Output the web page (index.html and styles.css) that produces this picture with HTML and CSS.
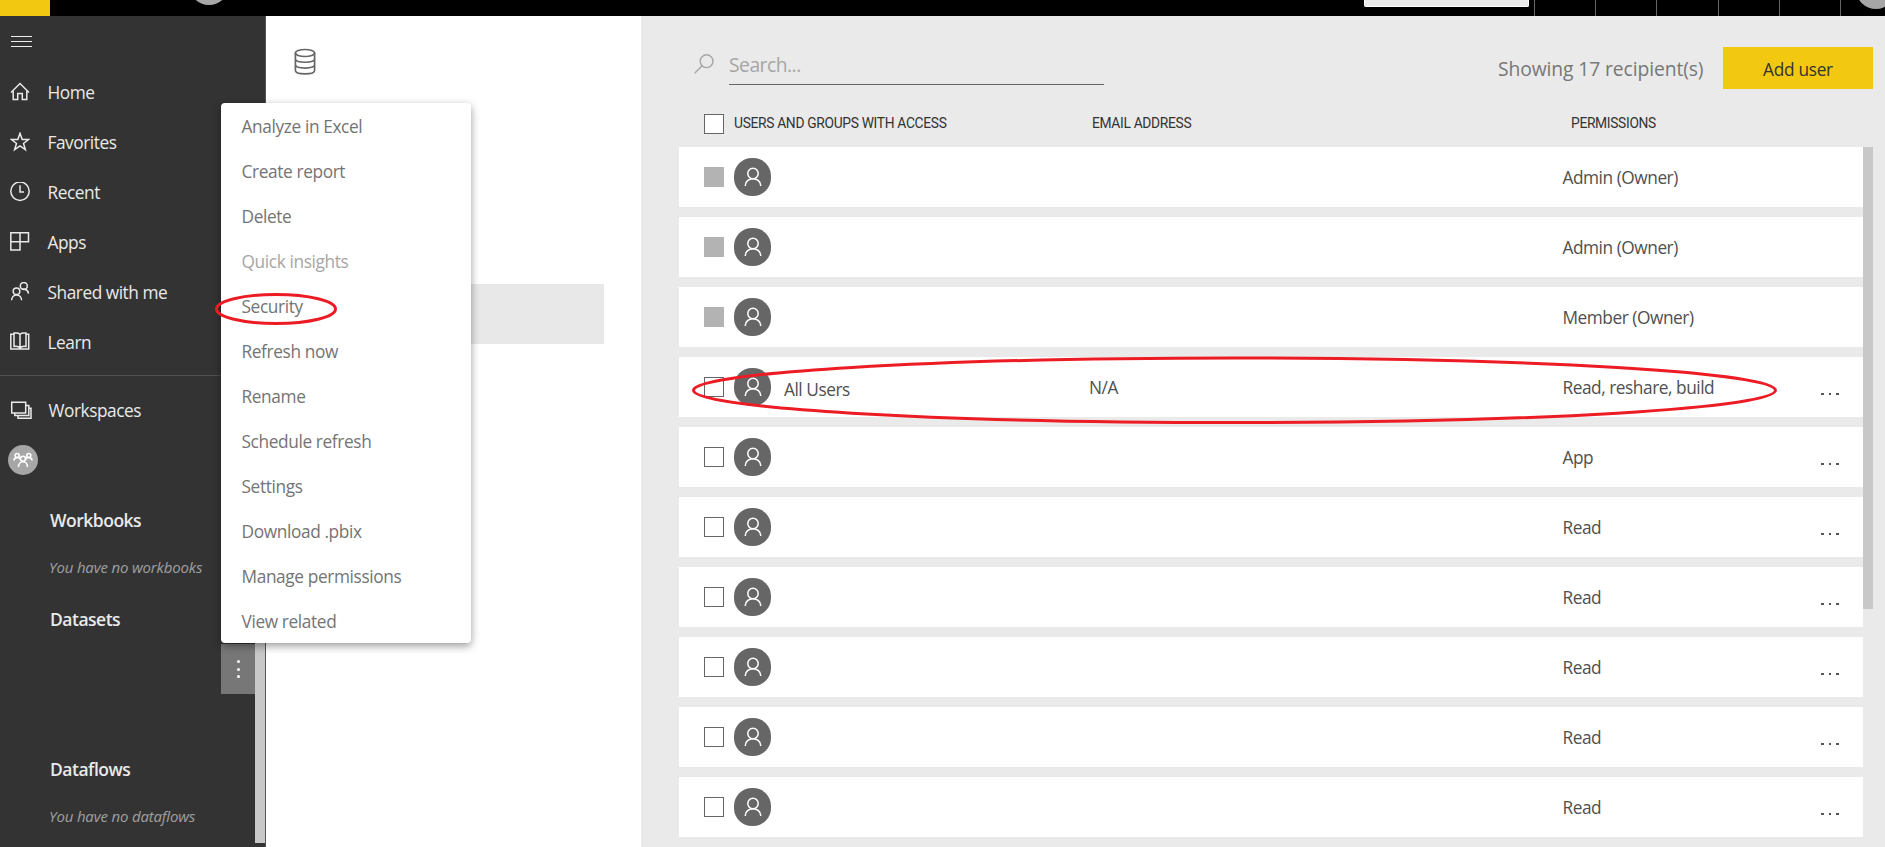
FILE: index.html
```
<!DOCTYPE html>
<html lang="en">
<head>
<meta charset="utf-8">
<title>Manage permissions</title>
<link rel="stylesheet" href="styles.css">
</head>
<body>
<svg class="defs" width="0" height="0" aria-hidden="true">
  <symbol id="person" viewBox="0 0 18 20"><circle cx="9" cy="6.5" r="5.2"/><path d="M1.3 19v-.6C1.3 14.500 4.800 11.700 9 11.700s7.700 2.800 7.700 6.700V19"/></symbol>
</svg>
<header class="topbar">
  <div class="launcher"></div>
  <div class="brand-avatar"></div>
  <div class="top-search"></div>
  <div class="top-cells"><i></i><i></i><i></i><i></i><i></i><i></i></div>
  <div class="user-avatar"></div>
</header>
<div class="body">
  <nav class="sidebar">
    <div class="nav-main">
      <div class="burger"><i></i><i></i><i></i></div>
      <a class="nav-item"><svg width="20" height="20" viewBox="0 0 20 20"><path d="M1 10.500 10 1.500l9 9M3.200 9v8.500h4.500v-6h4.600v6h4.500V9"/></svg><span>Home</span></a>
      <a class="nav-item"><svg width="20" height="20" viewBox="0 0 20 20"><path d="M10 1.300l2.200 6.200h6.300l-5 3.900 1.900 6.200L10 13.900l-5.400 3.700 1.900-6.200-5-3.900h6.300z"/></svg><span>Favorites</span></a>
      <a class="nav-item"><svg width="20" height="20" viewBox="0 0 20 20"><circle cx="10" cy="9.200" r="9.200"/><path d="M10 3.200v6.700h4"/></svg><span>Recent</span></a>
      <a class="nav-item"><svg width="20" height="20" viewBox="0 0 20 20"><path d="M.8.700h17.700v9H.8zM.8 9.700v8.400H10V.7"/></svg><span>Apps</span></a>
      <a class="nav-item"><svg width="20" height="20" viewBox="0 0 20 20"><circle cx="13.800" cy="3.900" r="3.500"/><path d="M12 7.400c1-.5 6-.5 6.500 4.300"/><circle cx="6.500" cy="9.300" r="3.300"/><path d="M1.600 18.200c.3-7 9.700-7 10 0"/></svg><span>Shared with me</span></a>
      <a class="nav-item"><svg width="20" height="20" viewBox="0 0 20 20"><path d="M10 2.200C8.500.800 6 .8 4 1.100v13.300c2-.4 4.500-.4 6 1.700 1.500-2.100 4-2.100 6-1.700V1.100c-2-.3-4.500-.3-6 1.100zv14M4 2.200H.8V17h17.900V2.200H16"/></svg><span>Learn</span></a>
    </div>
    <a class="nav-item workspaces"><svg width="22" height="20" viewBox="0 0 22 20"><path d="M1.700 2.200h14v10.700h-14zM4.800 13v2.600h14V5.400h-3M8 15.700v2.500h13V8.300h-2.200"/></svg><span>Workspaces</span></a>
    <div class="group-avatar"><svg width="20" height="16" viewBox="0 0 20 16"><circle cx="4.200" cy="3.500" r="2"/><circle cx="15.800" cy="3.500" r="2"/><circle cx="10" cy="6.700" r="2.500"/><path d="M1 8.500c0-3.500 5-3.800 6.200-1.200M19 8.500c0-3.500-5-3.800-6.200-1.200M5.500 15c0-7 9-7 9 0"/></svg></div>
    <h3 class="section">Workbooks</h3>
    <p class="empty">You have no workbooks</p>
    <h3 class="section">Datasets</h3>
    <div class="dataset-slot"></div>
    <h3 class="section">Dataflows</h3>
    <p class="empty">You have no dataflows</p>
    <div class="side-scroll"></div>
    <div class="more"><i></i><i></i><i></i></div>
  </nav>
  <section class="panel">
    <svg class="db" width="22" height="28" viewBox="0 0 22 28"><ellipse cx="11" cy="5" rx="9.600" ry="3.500"/><path d="M1.400 5v17.500c0 4.500 19.200 4.500 19.200 0V5M1.400 10.800c0 4.600 19.200 4.600 19.200 0M1.400 16.600c0 4.600 19.200 4.600 19.200 0"/></svg>
    <div class="selected"></div>
  </section>
  <main class="main">
    <div class="toolbar">
      <svg class="glass" width="20" height="20" viewBox="0 0 20 20"><circle cx="12.600" cy="7.200" r="6.400"/><path d="M8.100 11.800.6 19.300"/></svg>
      <div class="search">Search...</div>
      <div class="count">Showing 17 recipient(s)</div>
      <button class="add">Add user</button>
    </div>
    <div class="thead"><span class="check"></span><span class="h-name">USERS AND GROUPS WITH ACCESS</span><span class="h-mail">EMAIL ADDRESS</span><span class="h-perm">PERMISSIONS</span></div>
    <div class="list">
      <div class="rows">
        <div class="row"><span class="check off"></span><span class="avatar"><svg><use href="#person"/></svg></span><span class="name"></span><span class="mail"></span><span class="perm">Admin (Owner)</span></div>
        <div class="row"><span class="check off"></span><span class="avatar"><svg><use href="#person"/></svg></span><span class="name"></span><span class="mail"></span><span class="perm">Admin (Owner)</span></div>
        <div class="row"><span class="check off"></span><span class="avatar"><svg><use href="#person"/></svg></span><span class="name"></span><span class="mail"></span><span class="perm">Member (Owner)</span></div>
        <div class="row"><span class="check"></span><span class="avatar"><svg><use href="#person"/></svg></span><span class="name">All Users</span><span class="mail">N/A</span><span class="perm">Read, reshare, build</span><span class="dots"><i></i><i></i><i></i></span></div>
        <div class="row"><span class="check"></span><span class="avatar"><svg><use href="#person"/></svg></span><span class="name"></span><span class="mail"></span><span class="perm">App</span><span class="dots"><i></i><i></i><i></i></span></div>
        <div class="row"><span class="check"></span><span class="avatar"><svg><use href="#person"/></svg></span><span class="name"></span><span class="mail"></span><span class="perm">Read</span><span class="dots"><i></i><i></i><i></i></span></div>
        <div class="row"><span class="check"></span><span class="avatar"><svg><use href="#person"/></svg></span><span class="name"></span><span class="mail"></span><span class="perm">Read</span><span class="dots"><i></i><i></i><i></i></span></div>
        <div class="row"><span class="check"></span><span class="avatar"><svg><use href="#person"/></svg></span><span class="name"></span><span class="mail"></span><span class="perm">Read</span><span class="dots"><i></i><i></i><i></i></span></div>
        <div class="row"><span class="check"></span><span class="avatar"><svg><use href="#person"/></svg></span><span class="name"></span><span class="mail"></span><span class="perm">Read</span><span class="dots"><i></i><i></i><i></i></span></div>
        <div class="row"><span class="check"></span><span class="avatar"><svg><use href="#person"/></svg></span><span class="name"></span><span class="mail"></span><span class="perm">Read</span><span class="dots"><i></i><i></i><i></i></span></div>
      </div>
      <div class="thumb"></div>
    </div>
  </main>
</div>
<div class="menu">
  <a>Analyze in Excel</a>
  <a>Create report</a>
  <a>Delete</a>
  <a class="disabled">Quick insights</a>
  <a>Security</a>
  <a>Refresh now</a>
  <a>Rename</a>
  <a>Schedule refresh</a>
  <a>Settings</a>
  <a>Download .pbix</a>
  <a>Manage permissions</a>
  <a>View related</a>
</div>
<svg class="marks" width="1885" height="847" viewBox="0 0 1885 847">
  <ellipse cx="276" cy="309" rx="59.500" ry="14.500"/>
  <ellipse cx="1234.500" cy="390.300" rx="541" ry="32.300"/>
</svg>
</body>
</html>
```
FILE: styles.css
```
* { box-sizing: border-box; }
body {
  margin: 0;
  width: 1885px;
  height: 847px;
  overflow: hidden;
  position: relative;
  display: flex;
  flex-direction: column;
  font: 400 17.3px/24px "Open Sans", "Noto Sans", sans-serif;
  letter-spacing: -0.46px;
  background: #fff;
}
svg { fill: none; flex: none; }
.defs { position: absolute; }

/* Top bar */
.topbar {
  height: 16px;
  background: #000;
  display: flex;
  overflow: hidden;
  flex: none;
}
.topbar > div, .top-cells i { flex: none; }
.launcher { width: 50px; background: #f2c811; }
.brand-avatar {
  width: 40px; height: 40px;
  margin: -35px 0 0 139px;
  border-radius: 50%;
  background: #a6a6a6;
}
.top-search {
  width: 165px; height: 7px;
  margin-left: 1135px;
  background: #eaeaea;
  border: 1px solid #fff;
  border-top: 0;
  border-radius: 0 0 2px 2px;
}
.top-cells { display: flex; margin-left: 5px; }
.top-cells i { width: 61.2px; border-left: 1px solid #666; }
.top-cells i:last-child { width: 16px; }
.user-avatar {
  width: 40px; height: 40px;
  margin-top: -31px;
  border-radius: 50%;
  background: #a6a6a6;
}

.body { flex: 1; display: flex; min-height: 0; }

/* Sidebar */
.sidebar {
  position: relative;
  width: 266px;
  background: #333;
  border-right: 1px solid #555;
  color: #eaeaea;
  overflow: hidden;
}
.nav-main {
  height: 360px;
  padding-top: 20px;
  border-bottom: 1px solid #505050;
}
.burger {
  display: flex;
  flex-direction: column;
  gap: 4px;
  width: 21px;
  margin: 0 0 20px 11px;
}
.burger i { height: 1px; background: #eee; }
.nav-item {
  display: flex;
  align-items: center;
  height: 50px;
  padding-left: 10px;
  gap: 17.5px;
}
.nav-item span { padding-top: 2px; }
.nav-item svg { stroke: #eaeaea; stroke-width: 1.5; }
.workspaces { margin-top: 9px; gap: 16.5px; }
.group-avatar {
  display: flex;
  align-items: center;
  justify-content: center;
  width: 30px; height: 30px;
  margin: 10px 0 33px 8px;
  border-radius: 50%;
  background: #a6a6a6;
}
.group-avatar svg { stroke: #fff; stroke-width: 1.6; }
.section {
  margin: 0 0 0 50px;
  height: 24px;
  font-size: 17.5px;
  font-weight: 600;
  line-height: 24px;
  letter-spacing: -0.5px;
}
.empty {
  margin: 23px 0 28px 49px;
  height: 24px;
  font-size: 15px;
  font-style: italic;
  letter-spacing: -0.17px;
  color: #a0a0a0;
}
.dataset-slot { height: 126px; }
.side-scroll {
  position: absolute;
  left: 255px; top: 387px;
  width: 10px; height: 440px;
  background: #c8c8c8;
}
.more {
  position: absolute;
  left: 221px; top: 628px;
  width: 34px; height: 50px;
  display: flex;
  flex-direction: column;
  align-items: center;
  justify-content: center;
  gap: 4.500px;
  background: #777;
}
.more i { width: 3px; height: 3px; border-radius: 50%; background: #fff; }

/* Dataset panel */
.panel { width: 375px; background: #fff; padding: 32px 37px 0 28px; }
.db { display: block; stroke: #666; stroke-width: 1.7; }
.selected { height: 60px; margin-top: 208px; background: #e8e8e8; }

/* Permissions */
.main { flex: 1; background: #eaeaea; padding: 31px 12px 0 38px; }
.toolbar { display: flex; height: 42px; }
.glass { margin: 7px 0 0 15px; stroke: #a6a6a6; stroke-width: 1.4; }
.search {
  width: 375px; height: 38px;
  margin-left: 15px;
  border-bottom: 1px solid #666;
  font-size: 19.3px;
  line-height: 35px;
  letter-spacing: -0.5px;
  color: #a6a6a6;
}
.count {
  width: 225px;
  margin-left: auto;
  font-size: 19.3px;
  line-height: 44px;
  color: #777;
  letter-spacing: -0.1px;
}
.add {
  width: 150px; height: 42px;
  border: 0;
  padding: 3px 0 0;
  background: #f2c811;
  color: #333;
  font: inherit;
  letter-spacing: -0.3px;
}
.thead {
  display: flex;
  height: 58px;
  padding: 25px 0 0 25px;
  font: 400 13.800px/18px Roboto, sans-serif;
  letter-spacing: -0.32px;
  color: #333;
}
.h-name { width: 358px; margin-left: 10px; }
.h-mail { width: 479px; }
.check { flex: none; width: 20px; height: 20px; border: 1px solid #666; background: #fff; }
.off { background: #b3b3b3; border-color: #b3b3b3; }
.list { display: flex; }
.rows { display: flex; flex-direction: column; gap: 10px; width: 1184px; }
.row {
  display: flex;
  align-items: center;
  height: 60px;
  padding-left: 25px;
  background: #fff;
  color: #505050;
}
.avatar {
  flex: none;
  display: flex;
  align-items: center;
  justify-content: center;
  width: 37px; height: 38px;
  margin-left: 10px;
  border-radius: 18px;
  background: #666;
}
.avatar svg { width: 18px; height: 20px; stroke: #fff; stroke-width: 1.5; }
.name { width: 318px; padding: 6px 0 0 13px; }
.mail { width: 473.5px; padding-top: 2px; }
.perm { width: 258.5px; padding-top: 2px; }
.dots { display: flex; gap: 5px; padding-top: 14px; }
.dots i { width: 2.500px; height: 2px; background: #555; }
.thumb { width: 10px; height: 462px; background: #c8c8c8; }

/* Context menu */
.menu {
  position: absolute;
  left: 221px; top: 103px;
  width: 250px; height: 540px;
  border-radius: 4px;
  background: #fff;
  box-shadow: 0 3px 8px rgba(0, 0, 0, .4);
  color: #747474;
  letter-spacing: -0.38px;
}
.menu a {
  display: block;
  height: 45px;
  padding: 1px 0 0 20.5px;
  line-height: 45px;
}
.menu .disabled { color: #a6a6a6; }

/* Highlight ellipses */
.marks { position: absolute; left: 0; top: 0; pointer-events: none; stroke: #ed1c24; stroke-width: 3; }
```
